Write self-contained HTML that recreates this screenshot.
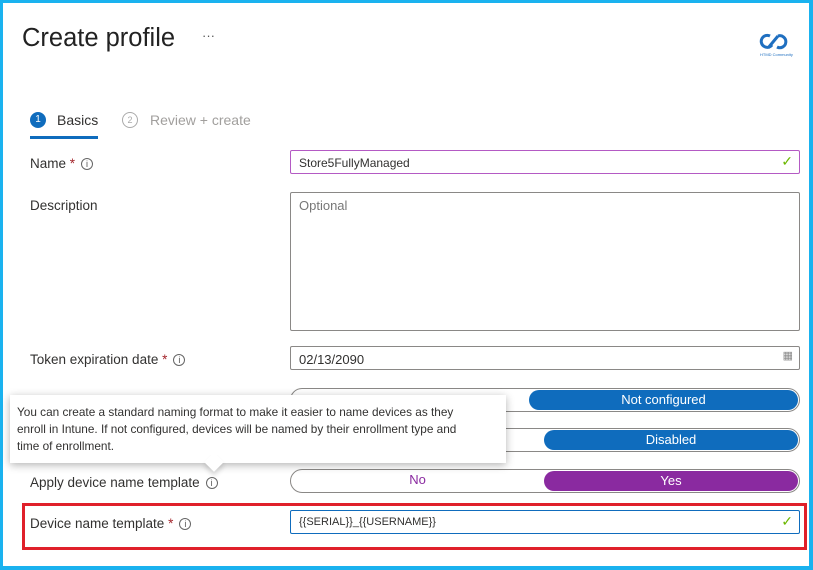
<!DOCTYPE html>
<html><head><meta charset="utf-8"><style>
*{box-sizing:border-box;margin:0;padding:0}
body{width:813px;height:570px;overflow:hidden;background:#1ab2ef;font-family:"Liberation Sans",sans-serif;color:#323130;position:relative}
.page{position:absolute;left:3px;top:3px;width:806px;height:563px;background:#fff}
.a{position:absolute}
.lbl{position:absolute;left:30px;font-size:13.5px;white-space:nowrap}
.lbl .s{color:#a4262c}
.info{display:inline-block;width:12px;height:12px;border:1px solid #666;border-radius:50%;font-size:9px;text-align:center;line-height:10px;vertical-align:1px;margin-left:6px;color:#555}
.inp{position:absolute;left:290px;width:510px;height:24px;border:1px solid #8a8886;border-radius:2px;font-size:12px;padding:5px 8px}
.chk{position:absolute;right:6px;top:2px;color:#6bb700;font-size:14px}
.tog{position:absolute;left:290px;width:510px;height:24px;border:1.5px solid #8a8886;border-radius:12px;font-size:13px}
.sel{position:absolute;top:1px;bottom:1px;right:1px;border-radius:11px;color:#fff;text-align:center;line-height:20px}
</style></head><body><div class="page">
<div class="a" style="left:19px;top:21px;font-size:25.5px;color:#222">Create profile</div>
<div class="a" style="left:199px;top:25px;font-size:13px;color:#555">···</div>
<svg class="a" style="left:755px;top:29px" width="34" height="20" viewBox="0 0 34 20"><path d="M12 4a6 6 0 1 0 2 9M10 16L20 4M20 4a6 6 0 1 1-1 11" fill="none" stroke="#1f6fc0" stroke-width="3"/></svg>
<div class="a" style="left:757px;top:49px;font-size:4px;color:#1f6fc0">HTMD Community</div>
<div class="a" style="left:27px;top:109px;width:16px;height:16px;border-radius:50%;background:#0f6cbd;color:#fff;font-size:10px;text-align:center;line-height:16px">1</div>
<div class="a" style="left:54px;top:109px;font-size:14px">Basics</div>
<div class="a" style="left:27px;top:133px;width:68px;height:3px;background:#0f6cbd"></div>
<div class="a" style="left:119px;top:109px;width:16px;height:16px;border-radius:50%;border:1px solid #aaa;color:#aaa;font-size:9px;text-align:center;line-height:14px">2</div>
<div class="a" style="left:147px;top:109px;font-size:14px;color:#a19f9d">Review + create</div>
<div class="lbl" style="left:27px;top:153px">Name <span class="s">*</span><span class="info">i</span></div>
<div class="inp" style="left:287px;top:147px;border:1.5px solid #b45ac4">Store5FullyManaged<span class="chk">✓</span></div>
<div class="lbl" style="left:27px;top:195px">Description</div>
<div class="inp" style="left:287px;top:189px;height:139px;color:#777;font-size:13px">Optional</div>
<div class="lbl" style="left:27px;top:349px">Token expiration date <span class="s">*</span><span class="info">i</span></div>
<div class="inp" style="left:287px;top:343px;font-size:13px">02/13/2090<span class="chk" style="color:#888;font-size:11px">▦</span></div>
<div class="tog" style="left:287px;top:385px"><div class="sel" style="left:238px;background:#0f6cbd">Not configured</div></div>
<div class="tog" style="left:287px;top:425px"><div class="sel" style="left:253px;background:#0f6cbd">Disabled</div></div>
<div class="lbl" style="left:27px;top:472px">Apply device name template<span class="info">i</span></div>
<div class="tog" style="left:287px;top:466px"><div class="a" style="left:0;width:253px;text-align:center;line-height:20px;color:#8a2aa0">No</div><div class="sel" style="left:253px;background:#8a2aa0">Yes</div></div>
<div class="a" style="left:19px;top:500px;width:785px;height:47px;border:3px solid #e0202a"></div>
<div class="lbl" style="left:27px;top:513px">Device name template <span class="s">*</span><span class="info">i</span></div>
<div class="inp" style="left:287px;top:507px;border:1.5px solid #0f6cbd;font-size:11px">{{SERIAL}}_{{USERNAME}}<span class="chk">✓</span></div>
<div class="a" style="left:7px;top:392px;width:496px;height:68px;background:#fff;box-shadow:0 2px 8px rgba(0,0,0,.3)"></div>
<div class="a" style="left:204px;top:452px;width:14px;height:14px;background:#fff;transform:rotate(45deg);box-shadow:3px 3px 5px rgba(0,0,0,.15)"></div>
<div class="a" style="left:7px;top:392px;width:496px;height:60px;background:#fff"></div>
<div class="a" style="left:14px;top:401px;font-size:11.8px;line-height:17px;color:#323130;white-space:nowrap">You can create a standard naming format to make it easier to name devices as they<br>enroll in Intune. If not configured, devices will be named by their enrollment type and<br>time of enrollment.</div>
</div></body></html>
